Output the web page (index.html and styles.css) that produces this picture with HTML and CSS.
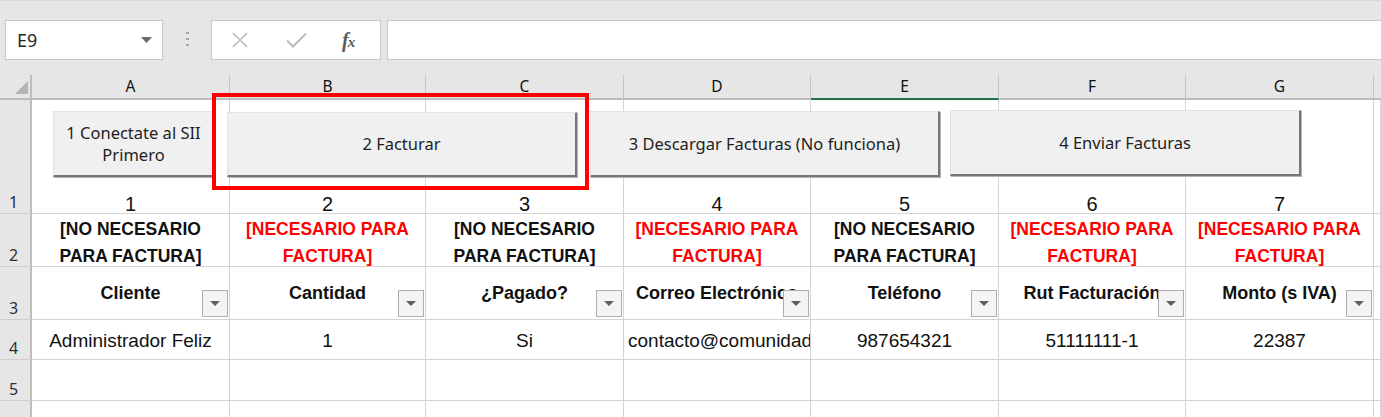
FILE: index.html
```html
<!DOCTYPE html>
<html lang="es">
<head>
<meta charset="utf-8">
<title>Facturación</title>
<link rel="stylesheet" href="styles.css">
</head>
<body>
<div class="app">
  <div class="toolbar">
    <div class="namebox">
      <span>E9</span>
      <svg class="caret" width="11" height="6" viewBox="0 0 11 6"><path d="M0 0H11L5.5 6Z" fill="#6b6b6b"/></svg>
    </div>
    <div class="grip"><i></i><i></i><i></i></div>
    <div class="fxbox">
      <svg class="ico-x" width="16" height="16" viewBox="0 0 16 16"><path d="M1 1L15 15M15 1L1 15" stroke="#bcbcbc" stroke-width="1.7" fill="none"/></svg>
      <svg class="ico-ok" width="21" height="16" viewBox="0 0 21 16"><path d="M1 8.5L7 14.5L20 1.5" stroke="#bcbcbc" stroke-width="2" fill="none"/></svg>
      <span class="fx">f<span class="fxs">x</span></span>
    </div>
    <div class="formula"></div>
  </div>

  <div class="sheet">
    <div class="corner"><svg width="13" height="13" viewBox="0 0 13 13"><path d="M13 0V13H0Z" fill="#b4b4b4"/></svg></div>
    <div class="colhdr">A</div>
    <div class="colhdr">B</div>
    <div class="colhdr">C</div>
    <div class="colhdr">D</div>
    <div class="colhdr sel">E</div>
    <div class="colhdr">F</div>
    <div class="colhdr">G</div>
    <div class="colhdr last"></div>

    <div class="rowhdr">1</div>
    <div class="c r1">1</div>
    <div class="c r1">2</div>
    <div class="c r1">3</div>
    <div class="c r1">4</div>
    <div class="c r1">5</div>
    <div class="c r1">6</div>
    <div class="c r1">7</div>
    <div class="c r1"></div>

    <div class="rowhdr">2</div>
    <div class="c r2">[NO NECESARIO<br>PARA FACTURA]</div>
    <div class="c r2 red">[NECESARIO PARA<br>FACTURA]</div>
    <div class="c r2">[NO NECESARIO<br>PARA FACTURA]</div>
    <div class="c r2 red">[NECESARIO PARA<br>FACTURA]</div>
    <div class="c r2">[NO NECESARIO<br>PARA FACTURA]</div>
    <div class="c r2 red">[NECESARIO PARA<br>FACTURA]</div>
    <div class="c r2 red">[NECESARIO PARA<br>FACTURA]</div>
    <div class="c r2"></div>

    <div class="rowhdr">3</div>
    <div class="c r3">Cliente<span class="filter"></span></div>
    <div class="c r3">Cantidad<span class="filter"></span></div>
    <div class="c r3">¿Pagado?<span class="filter"></span></div>
    <div class="c r3">Correo Electrónico<span class="filter"></span></div>
    <div class="c r3">Teléfono<span class="filter"></span></div>
    <div class="c r3">Rut Facturación<span class="filter"></span></div>
    <div class="c r3">Monto (s IVA)<span class="filter"></span></div>
    <div class="c r3"></div>

    <div class="rowhdr">4</div>
    <div class="c r4">Administrador Feliz</div>
    <div class="c r4">1</div>
    <div class="c r4">Si</div>
    <div class="c r4 left">contacto@comunidadfeliz.cl</div>
    <div class="c r4">987654321</div>
    <div class="c r4">51111111-1</div>
    <div class="c r4">22387</div>
    <div class="c r4"></div>

    <div class="rowhdr">5</div>
    <div class="c"></div><div class="c"></div><div class="c"></div><div class="c"></div>
    <div class="c"></div><div class="c"></div><div class="c"></div><div class="c"></div>

    <div class="rowhdr"></div>
    <div class="c"></div><div class="c"></div><div class="c"></div><div class="c"></div>
    <div class="c"></div><div class="c"></div><div class="c"></div><div class="c"></div>
  </div>

  <button class="btn b1">1 Conectate al SII<br>Primero</button>
  <button class="btn b2">2 Facturar</button>
  <button class="btn b3">3 Descargar Facturas (No funciona)</button>
  <button class="btn b4">4 Enviar Facturas</button>
  <div class="redbox"></div>
</div>
</body>
</html>
```

FILE: styles.css
```css
* { box-sizing: border-box; margin: 0; padding: 0; }
body { margin: 0; background: #ffffff; }

.app {
  position: relative;
  width: 1381px;
  height: 417px;
  overflow: hidden;
  background: #e6e6e6;
  font-family: "Noto Sans", "DejaVu Sans", sans-serif;
}

/* ---------- formula bar ---------- */
.toolbar {
  height: 75px;
  display: flex;
  align-items: flex-start;
  padding: 19px 0 0 5px;
  border-top: 1px solid #d8d8d8;
}
.namebox {
  width: 158px;
  height: 40px;
  background: #ffffff;
  border: 1px solid #c8c8c8;
  display: flex;
  align-items: center;
  justify-content: space-between;
  padding: 0 10px 0 11px;
  font-size: 18px;
  color: #262626;
}
.grip {
  width: 3px;
  margin: 12px 22px 0 23px;
  display: flex;
  flex-direction: column;
  gap: 4px;
}
.grip i {
  display: block;
  width: 3px;
  height: 2px;
  background: #a6a6a6;
}
.fxbox {
  width: 170px;
  height: 40px;
  background: #ffffff;
  border: 1px solid #c8c8c8;
  display: flex;
  align-items: center;
  padding-left: 20px;
}
.ico-ok { margin-left: 38px; }
.fx {
  margin-left: 35px;
  font-family: "Liberation Serif", "DejaVu Serif", serif;
  font-style: italic;
  font-weight: bold;
  font-size: 20px;
  color: #5c5c5c;
}
.fxs {
  font-size: 15px;
  margin-left: -1px;
}
.formula {
  flex: 1;
  height: 40px;
  margin-left: 6px;
  margin-right: -10px;
  background: #ffffff;
  border: 1px solid #c8c8c8;
}

/* ---------- sheet grid ---------- */
.sheet {
  display: grid;
  grid-template-columns: 32px 198px 196px 198px 187px 188px 187px 188px 1fr;
  grid-template-rows: 25px 114px 53px 53px 40px 41px 41px;
  font-family: "Liberation Sans", Arial, sans-serif;
}
.corner {
  background: #e6e6e6;
  border-right: 2px solid #bdbdbd;
  border-bottom: 2px solid #bdbdbd;
  display: flex;
  justify-content: flex-end;
  align-items: flex-end;
  padding: 0 2px 4px 0;
}
.colhdr {
  background: #e6e6e6;
  border-right: 1px solid #c4c4c4;
  border-bottom: 2px solid #bdbdbd;
  text-align: center;
  font-family: "Noto Sans", "DejaVu Sans", sans-serif;
  font-size: 15.5px;
  line-height: 18px;
  padding-top: 2px;
  color: #111111;
}
.colhdr.sel { border-bottom-color: #217346; }
.colhdr.last { border-right: none; }

.rowhdr {
  background: #e6e6e6;
  border-right: 2px solid #bdbdbd;
  border-bottom: 1px solid #cdcdcd;
  display: flex;
  align-items: flex-end;
  justify-content: center;
  padding: 0 3px 1px 0;
  font-family: "Noto Sans", "DejaVu Sans", sans-serif;
  font-size: 16px;
  line-height: 19px;
  color: #2e2e38;
}

.c {
  position: relative;
  background: #ffffff;
  border-right: 1px solid #d4d4d4;
  border-bottom: 1px solid #d4d4d4;
  overflow: hidden;
  white-space: nowrap;
  text-align: center;
  color: #111111;
}
.r1 {
  font-size: 20px;
  line-height: 22px;
  padding-top: 93px;
}
.r2 {
  font-weight: bold;
  font-size: 17.5px;
  line-height: 27px;
  padding-top: 2px;
}
.r3 {
  font-weight: bold;
  font-size: 18px;
  line-height: 22px;
  padding-top: 15px;
}
.r4 {
  font-size: 19px;
  line-height: 22px;
  padding-top: 10px;
}
.red { color: #ff0000; }
.left { text-align: left; padding-left: 4px; }

.filter {
  position: absolute;
  right: 1px;
  bottom: 2px;
  width: 26px;
  height: 27px;
  background: #f4f4f4;
  border: 1px solid #adadb3;
}
.filter::after {
  content: "";
  position: absolute;
  left: 7px;
  top: 10px;
  border-left: 5px solid transparent;
  border-right: 5px solid transparent;
  border-top: 5px solid #5e5e5e;
}

/* ---------- form buttons (overlay) ---------- */
.btn {
  position: absolute;
  background: #f0f0f0;
  border-top: 1px solid #e2e2e2;
  border-left: 1px solid #e2e2e2;
  border-right: 2px solid #767676;
  border-bottom: 2px solid #767676;
  box-shadow: 1px 1px 0 #b4b4b4;
  font-family: "Noto Sans", "DejaVu Sans", sans-serif;
  font-size: 16.5px;
  line-height: 22px;
  color: #1e1e1e;
  text-align: center;
}
.b1 { left: 53px; top: 111px; width: 162px; height: 66px; }
.b2 { left: 227px; top: 112px; width: 350px; height: 65px; }
.b3 { left: 590px; top: 111px; width: 350px; height: 66px; }
.b4 { left: 950px; top: 110px; width: 351px; height: 66px; }

.redbox {
  position: absolute;
  left: 212px;
  top: 93px;
  width: 377px;
  height: 97px;
  border: 4px solid #ff0000;
  pointer-events: none;
}
```
